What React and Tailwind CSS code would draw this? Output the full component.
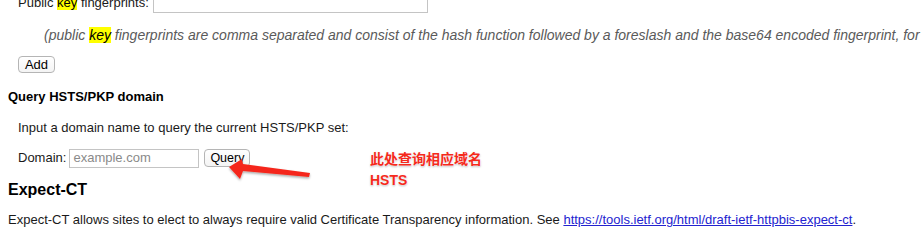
import React from 'react';

const font = { fontFamily: '"Liberation Sans", Arial, sans-serif' };

function Mark({ children }) {
  return <span className="bg-[#ffff00] text-black">{children}</span>;
}

function Arrow() {
  return (
    <svg width="100" height="40" viewBox="0 0 100 40" className="absolute left-[222px] top-[151px]">
      <defs>
        <filter id="sh" x="-20%" y="-50%" width="140%" height="200%">
          <feDropShadow dx="0" dy="1.5" stdDeviation="1.2" floodColor="#000" floodOpacity="0.35" />
        </filter>
      </defs>
      {/* tip sits just under the Query button */}
      <polygon
        points="7,16 20,8 21,13 88,22 87,26 21,20 18,28"
        fill="#f5281b"
        filter="url(#sh)"
      />
    </svg>
  );
}

export default function App() {
  return (
    <div className="relative w-[922px] h-[241px] overflow-hidden bg-white text-[13px] text-[#1a1a1a]" style={font}>
      <div className="flex flex-col mt-[-7px]">
        {/* fingerprints row */}
        <div className="flex items-center h-[20px] pl-[18px] whitespace-nowrap">
          <span>Public <Mark>key</Mark> fingerprints:</span>
          <input className="ml-[4px] w-[275px] h-[20px] border border-[#c4c4c4] bg-white" />
        </div>
        <div className="h-[24px] leading-[24px] mt-[10px] pl-[44px] whitespace-nowrap italic text-[14px] text-[#5a5a5a]">
          (public <Mark>key</Mark> fingerprints are comma separated and consist of the hash function followed by a foreslash and the base64 encoded fingerprint, for example
        </div>
        <div className="flex pl-[18px] mt-[9px]">
          <button className="h-[17px] w-[37px] rounded-[4px] border border-[#b5b5b5] bg-gradient-to-b from-white to-[#f4f4f4] text-[13px] leading-none text-black">
            Add
          </button>
        </div>

        {/* Query section */}
        <div className="flex items-center h-[20px] mt-[14px] pl-[8px] font-bold text-black">
          Query HSTS/PKP domain
        </div>
        <div className="flex items-center h-[20px] mt-[11px] pl-[18px]">
          Input a domain name to query the current HSTS/PKP set:
        </div>
        <div className="flex items-center h-[20px] mt-[10px] pl-[18px] whitespace-nowrap">
          <span>Domain:</span>
          <input
            placeholder="example.com"
            className="ml-[3px] w-[130px] h-[19px] border border-[#c4c4c4] px-[3px] text-[13px] placeholder:text-[#8a8a8a] bg-white"
          />
          <button className="ml-[5px] h-[18px] w-[46px] rounded-[4px] border border-[#b5b5b5] bg-gradient-to-b from-white to-[#f4f4f4] text-[12.5px] leading-none text-black">
            Query
          </button>
        </div>

        {/* Expect-CT */}
        <div className="flex items-center h-[22px] mt-[11px] pl-[8px] text-[16px] font-bold text-black">
          Expect-CT
        </div>
        <div className="h-[20px] leading-[20px] mt-[9px] pl-[8px] whitespace-nowrap">
          Expect-CT allows sites to elect to always require valid Certificate Transparency information. See{' '}
          <a href="#" className="text-[#2323cf] underline">https://tools.ietf.org/html/draft-ietf-httpbis-expect-ct</a>.
        </div>
      </div>

      <Arrow />
      <div
        className="absolute left-[370px] top-[149px] text-[14px] leading-[21px] font-bold text-[#f52a1c] [text-shadow:0_0_2px_#fff,0_0_2px_#fff,0_1px_2px_rgba(0,0,0,0.35)]"
        style={{ fontFamily: '"Liberation Sans", "Noto Sans CJK SC", sans-serif' }}
      >
        <div>此处查询相应域名</div>
        <div>HSTS</div>
      </div>
    </div>
  );
}
